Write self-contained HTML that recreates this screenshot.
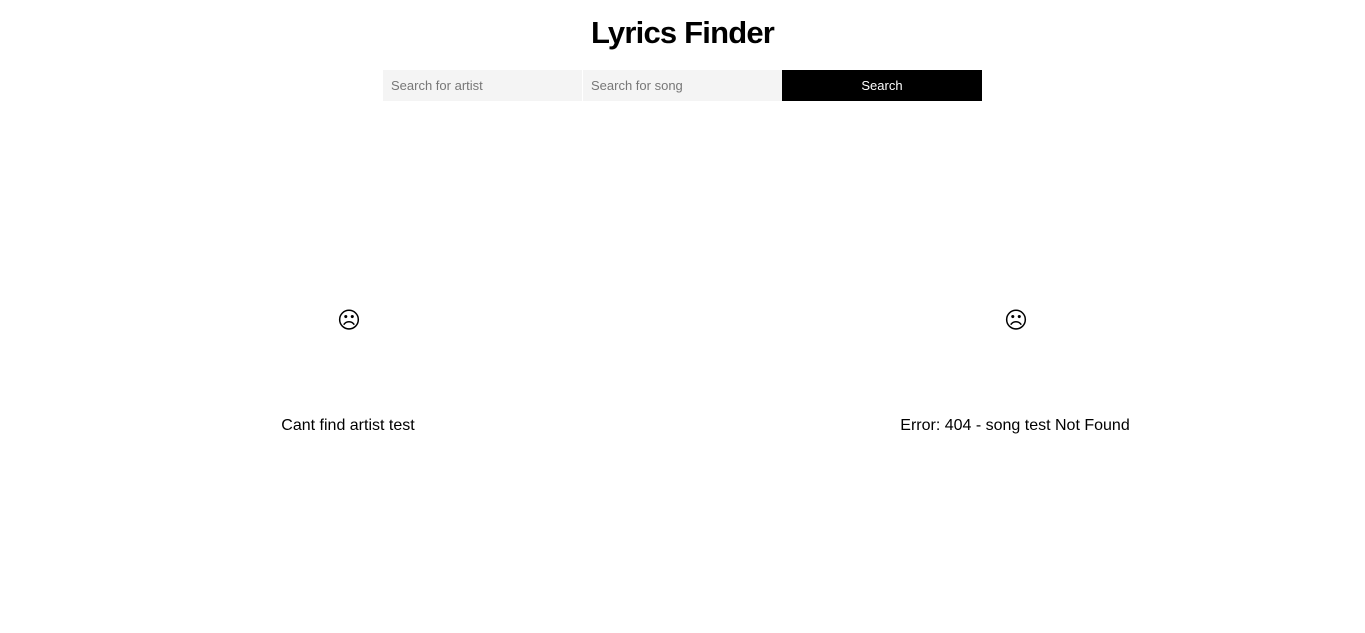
<!DOCTYPE html>
<html><head><meta charset="utf-8"><style>
html,body{margin:0;padding:0;background:#fff;width:1365px;height:633px;overflow:hidden;font-family:"Liberation Sans",sans-serif;}
h1{position:absolute;top:15px;left:0;width:1365px;text-align:center;margin:0;font-size:31px;font-weight:bold;letter-spacing:-0.8px;}
.in{position:absolute;top:70px;height:31px;width:199px;background:#f4f4f4;color:#777;font-size:13px;line-height:31px;box-sizing:border-box;padding-left:8px;}
.btn{position:absolute;top:70px;left:782px;width:200px;height:31px;background:#000;color:#fff;font-size:13px;line-height:31px;text-align:center;}
.face{position:absolute;top:306px;font-size:23px;width:100px;text-align:center;line-height:28px;}
.msg{position:absolute;top:416px;font-size:16px;width:400px;text-align:center;line-height:20px;}
</style></head><body>
<h1>Lyrics Finder</h1>
<div class="in" style="left:383px">Search for artist</div>
<div class="in" style="left:583px">Search for song</div>
<div class="btn">Search</div>
<div class="face" style="left:299px">☹</div>
<div class="face" style="left:966px">☹</div>
<div class="msg" style="left:148px">Cant find artist test</div>
<div class="msg" style="left:815px">Error: 404 - song test Not Found</div>
</body></html>
